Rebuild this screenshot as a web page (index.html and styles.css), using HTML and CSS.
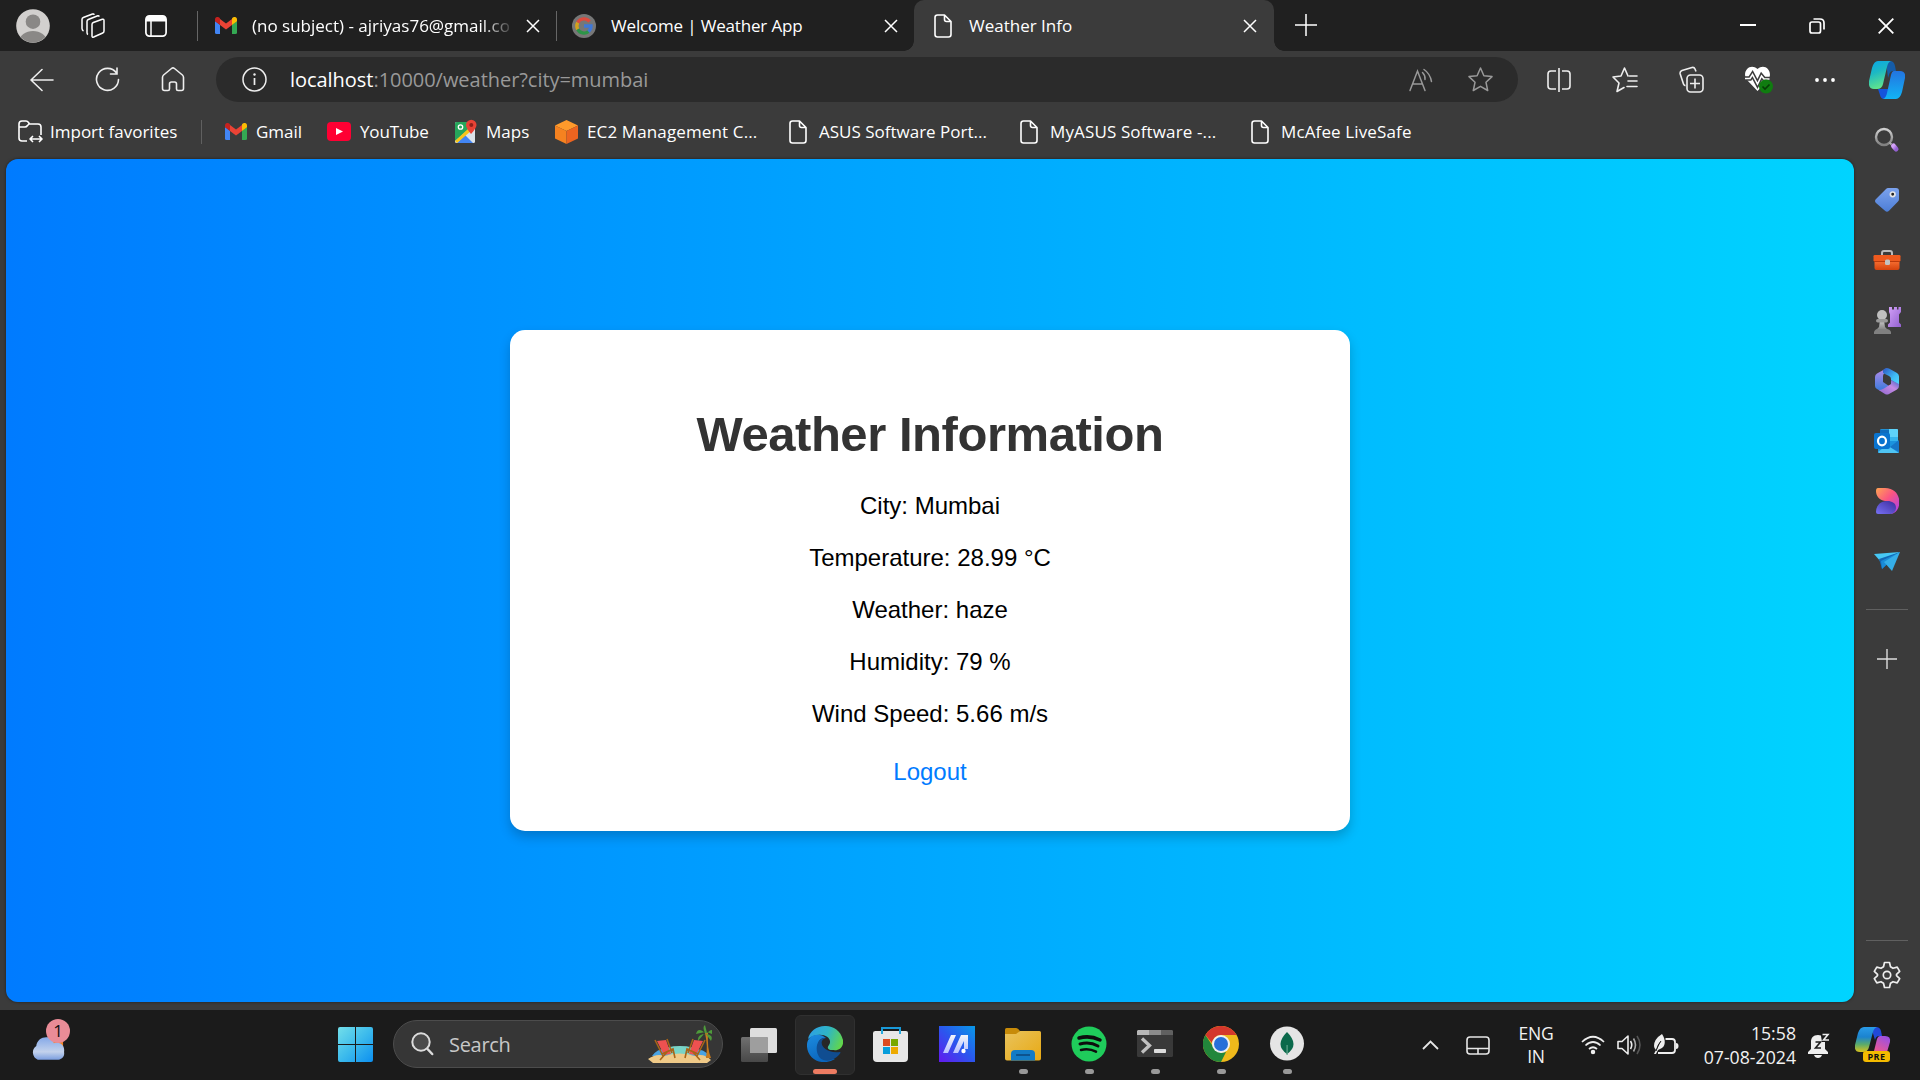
FILE: index.html
```html
<!DOCTYPE html>
<html lang="en">
<head>
<meta charset="utf-8">
<title>Weather Info</title>
<link rel="stylesheet" href="styles.css">
</head>
<body>
<svg class="defs" aria-hidden="true">
  <defs>
    <linearGradient id="gBlueGreen" x1="0" y1="0" x2="0.3" y2="1"><stop offset="0" stop-color="#0aa5e8"/><stop offset=".45" stop-color="#1cb8c4"/><stop offset="1" stop-color="#5fe38d"/></linearGradient>
    <linearGradient id="gBlue" x1="0" y1="0" x2="0" y2="1"><stop offset="0" stop-color="#2374e0"/><stop offset="1" stop-color="#12b4f5"/></linearGradient>
    <linearGradient id="gCopL" x1="0" y1="0" x2="0" y2="1"><stop offset="0" stop-color="#2a9be8"/><stop offset=".4" stop-color="#1b83cf"/><stop offset=".7" stop-color="#5cab6a"/><stop offset="1" stop-color="#d9c31c"/></linearGradient>
    <linearGradient id="gCopR" x1=".7" y1="0" x2=".2" y2="1"><stop offset="0" stop-color="#9d50e0"/><stop offset=".6" stop-color="#e0579c"/><stop offset="1" stop-color="#f47a62"/></linearGradient>
    <linearGradient id="gPurple" x1="0" y1="0" x2="1" y2="1"><stop offset="0" stop-color="#d3a2f8"/><stop offset="1" stop-color="#9360d0"/></linearGradient>
    <linearGradient id="gGrey" x1="0" y1="0" x2="0" y2="1"><stop offset="0" stop-color="#d0d0d0"/><stop offset="1" stop-color="#808080"/></linearGradient>
    <linearGradient id="gTag" x1="0" y1="0" x2="0" y2="1"><stop offset="0" stop-color="#7ba2ee"/><stop offset="1" stop-color="#4d7ed5"/></linearGradient>
    <linearGradient id="gBox" x1="0" y1="0" x2="0" y2="1"><stop offset="0" stop-color="#fb7436"/><stop offset="1" stop-color="#d4420d"/></linearGradient>
    <linearGradient id="gM1" x1="0" y1="0" x2="0" y2="1"><stop offset="0" stop-color="#b98bea"/><stop offset="1" stop-color="#3a7bdc"/></linearGradient>
    <linearGradient id="gM2" x1="0" y1="0" x2="1" y2="1"><stop offset="0" stop-color="#2d55c4"/><stop offset=".6" stop-color="#3fbdf5"/><stop offset="1" stop-color="#55d8fb"/></linearGradient>
    <linearGradient id="gM3" x1="0" y1="1" x2="1" y2="0"><stop offset="0" stop-color="#8a63cf"/><stop offset=".6" stop-color="#c58be2"/><stop offset="1" stop-color="#3c62c9"/></linearGradient>
    <linearGradient id="gDes" x1="0" y1="0" x2="1" y2="1"><stop offset="0" stop-color="#ffa552"/><stop offset=".45" stop-color="#fb5581"/><stop offset="1" stop-color="#a63df5"/></linearGradient>
    <linearGradient id="gDes2" x1="0" y1="1" x2="1" y2="0"><stop offset="0" stop-color="#7771f5"/><stop offset="1" stop-color="#3c2b9b"/></linearGradient>
    <linearGradient id="gWin" x1="0" y1="0" x2="1" y2="1"><stop offset="0" stop-color="#73dfea"/><stop offset=".5" stop-color="#3dbbec"/><stop offset="1" stop-color="#0c8ff0"/></linearGradient>
    <linearGradient id="gCloud" x1="0" y1="0" x2="0" y2="1"><stop offset="0" stop-color="#84a8e8"/><stop offset=".65" stop-color="#c3d2ec"/><stop offset="1" stop-color="#7b9ee0"/></linearGradient>
    <linearGradient id="gEdge1" x1="0" y1=".3" x2="1" y2=".6"><stop offset="0" stop-color="#2d9fe4"/><stop offset=".5" stop-color="#2fb5c5"/><stop offset="1" stop-color="#62d64b"/></linearGradient>
    <linearGradient id="gEdge2" x1="0" y1="0" x2=".4" y2="1"><stop offset="0" stop-color="#1c8ce0"/><stop offset="1" stop-color="#0b66bd"/></linearGradient>
    <linearGradient id="gAsus" x1="1" y1="0" x2="0" y2="1"><stop offset="0" stop-color="#0899e8"/><stop offset=".5" stop-color="#2b56ee"/><stop offset="1" stop-color="#6419ee"/></linearGradient>
    <linearGradient id="gFolder" x1="0" y1="0" x2="1" y2="1"><stop offset="0" stop-color="#e9c35d"/><stop offset="1" stop-color="#e8a913"/></linearGradient>
    <linearGradient id="gStroke" x1="0" y1="0" x2="0" y2="1"><stop offset="0" stop-color="#f2f5fb"/><stop offset="1" stop-color="#b7bfff"/></linearGradient>
    <linearGradient id="gBack" x1="0" y1="0" x2="0" y2="1"><stop offset="0" stop-color="#707070"/><stop offset="1" stop-color="#484848"/></linearGradient>
    <symbol id="gmail" viewBox="0 0 22 17">
      <path fill="#4285f4" d="M0 4v11.5Q0 17 1.5 17H5V7.700z"/><path fill="#34a853" d="M22 4v11.500q0 1.500-1.500 1.500H17V7.700z"/>
      <path fill="#ea4335" d="M5 2l6 4.500L17 2v6l-6 4.500L5 8z"/><path fill="#c5221f" d="M0 2.500C0 0 2.700-.8 4.500.8L5 1.500V8L0 4.300z"/><path fill="#fbbc04" d="M22 2.500C22 0 19.300-.8 17.500.8l-.5.700V8l5-3.700z"/>
    </symbol>
    <symbol id="file" viewBox="0 0 18 24"><path fill="none" stroke="#fff" stroke-width="1.600" stroke-linejoin="round" d="M3.500 1h7L17 7.500v13q0 2.500-2.500 2.500h-11Q1 23 1 20.500v-17Q1 1 3.500 1zM10.500 1v4.500q0 2 2 2H17"/></symbol>
    <symbol id="close" viewBox="0 0 14 14"><path fill="none" stroke="#fff" stroke-width="1.500" d="M1 1l12 12M13 1L1 13"/></symbol>
  </defs>
</svg>

<header class="tabstrip">
  <div class="strip-actions">
    <svg width="34" height="34" viewBox="0 0 34 34"><clipPath id="av"><circle cx="17" cy="17" r="16.500"/></clipPath><circle cx="17" cy="17" r="16.800" fill="#d2d0ce"/><g fill="#8a8886" clip-path="url(#av)"><circle cx="17" cy="12.700" r="7.300"/><path d="M2.500 34c1-16 28-16 29 0z"/></g></svg>
    <svg width="26" height="26" viewBox="0 0 26 26" fill="none" stroke="#fff" stroke-width="1.500" stroke-linejoin="round"><path d="M12 11.500q0-1.500 1.300-2l9-3.200q1.700-.5 1.700 1.200V18q0 1.500-1.300 2l-9 4q-1.700.6-1.700-1zM8 21.500q-1-.4-1-2V8.500q0-1.400 1.300-2l9.500-3.700q1-.3 1.500.8M3.500 18q-1.500-.8-1.500-2.500V6.500Q2 5 3.300 4.500L12.500 1q1.300-.4 1.700.9"/></svg>
    <svg width="22" height="22" viewBox="0 0 22 22"><rect x=".9" y=".9" width="20.200" height="20.200" rx="3.500" fill="none" stroke="#fff" stroke-width="1.700"/><path fill="#fff" d="M1 6.500V4q0-3 3-3h14q3 0 3 3v2.500z"/><path stroke="#fff" stroke-width="1.500" d="M6 6v15"/></svg>
  </div>
  <div class="tab tab-divided"><svg width="22" height="17"><use href="#gmail"/></svg><span class="tab-title faded">(no subject) - ajriyas76@gmail.co</span><svg class="tab-close" width="14" height="14"><use href="#close"/></svg></div>
  <div class="tab tab-divided tab-second">
    <svg width="24" height="24" viewBox="0 0 24 24"><circle cx="12" cy="12" r="12" fill="#777"/><g fill="none" stroke-width="3.300"><path stroke="#dd4b3e" d="M17.500 7.500A7.200 7.200 0 0 0 5.700 8.600"/><path stroke="#d3a21d" d="M5.700 8.600a7.200 7.200 0 0 0 0 6.800"/><path stroke="#2d9448" d="M5.700 15.400a7.200 7.200 0 0 0 10.800 2.100"/><path stroke="#3f78d8" d="M16.500 17.500A7.200 7.200 0 0 0 19 12h-7"/></g></svg>
    <span class="tab-title tight">Welcome | Weather App</span><svg class="tab-close" width="14" height="14"><use href="#close"/></svg></div>
  <div class="tab tab-active"><svg width="18" height="24"><use href="#file"/></svg><span class="tab-title">Weather Info</span><svg class="tab-close" width="14" height="14"><use href="#close"/></svg></div>
  <svg class="new-tab" width="22" height="22" viewBox="0 0 22 22"><path stroke="#fff" stroke-width="1.500" d="M11 0v22M0 11h22"/></svg>
  <div class="window-controls">
    <svg width="16" height="16" viewBox="0 0 16 16"><path stroke="#fff" stroke-width="2" d="M0 7h16"/></svg>
    <svg width="16" height="16" viewBox="0 0 16 16" fill="none" stroke="#fff" stroke-width="1.700"><rect x="1" y="4" width="10.500" height="11" rx="2"/><path d="M4.500 1H11q4 0 4 4v6.500"/></svg>
    <svg width="16" height="16" viewBox="0 0 16 16"><path stroke="#fff" stroke-width="1.800" d="M.7.7l14.600 14.600M15.300.7L.7 15.300"/></svg>
  </div>
</header>

<nav class="toolbar">
  <div class="nav-buttons">
    <svg width="24" height="24" viewBox="0 0 24 24" fill="none" stroke="#eee" stroke-width="1.600" stroke-linecap="round" stroke-linejoin="round"><path d="M23 12H1M12 1.500L1 12l11 10.500"/></svg>
    <svg width="25" height="25" viewBox="0 0 25 25" fill="none" stroke="#eee" stroke-width="1.600" stroke-linecap="round"><path d="M23.500 12.500A11 11 0 1 1 21.500 6M22 1v6h-6.500"/></svg>
    <svg width="24" height="25" viewBox="0 0 24 25" fill="none" stroke="#eee" stroke-width="1.600" stroke-linejoin="round"><path d="M1.500 10.500Q1.500 9 2.600 8L10.500 1.500q1.500-1.200 3 0L21.400 8q1.100 1 1.100 2.500v11q0 2-2 2H17q-1.500 0-1.500-1.500v-5q0-2-2-2h-3q-2 0-2 2v5q0 1.500-1.500 1.500H3.500q-2 0-2-2z"/></svg>
  </div>
  <div class="address">
    <svg width="25" height="25" viewBox="0 0 25 25"><circle cx="12.500" cy="12.500" r="11.500" fill="none" stroke="#eee" stroke-width="1.500"/><path stroke="#eee" stroke-width="1.700" d="M12.500 11v7"/><circle cx="12.500" cy="7.500" r="1.200" fill="#eee"/></svg>
    <span class="url"><b>localhost</b>:10000/weather?city=mumbai</span>
    <svg class="read-aloud" width="24" height="24" viewBox="0 0 24 24" fill="none" stroke="#999" stroke-width="1.500" stroke-linecap="round"><path d="M1 22.500L8.500 3 16 22.500M4 16h9.500M13.500 4.500q3 3 2.500 7M15 1.500q6 4 7.500 12"/></svg>
    <svg width="25" height="25" viewBox="0 0 25 25" fill="none" stroke="#999" stroke-width="1.500" stroke-linejoin="round"><path d="M12.500 1l3.400 7.700 8.100.9-6 5.700 1.700 8.200-7.200-4.200-7.200 4.200L7 15.300 1 9.600l8.100-.9z"/></svg>
  </div>
  <div class="tool-icons">
    <svg width="24" height="26" viewBox="0 0 24 26" fill="none" stroke="#eee" stroke-width="1.600"><path d="M9 4H4Q1 4 1 7v12q0 3 3 3h5M15 4h5q3 0 3 3v12q0 3-3 3h-5M12 1v24"/></svg>
    <svg width="26" height="26" viewBox="0 0 26 26" fill="none" stroke="#eee" stroke-width="1.600" stroke-linejoin="round" stroke-linecap="round"><path d="M16 9L12.500 1 9 9 1 10l6 6-2 8.500 7-4M17.500 9H25M16 14h9M15 19.500h10"/></svg>
    <svg width="25" height="27" viewBox="0 0 25 27" fill="none" stroke="#eee" stroke-width="1.600"><rect x="8" y="9" width="16" height="17" rx="3.500"/><path d="M16 12.500v10M11 17.500h10M17 5.500L16 3q-.8-2-3-1.500L3 4.500Q.6 5.500 1.200 8L4.500 18q.5 1.500 2 1.600"/></svg>
    <svg width="28" height="29" viewBox="0 0 28 29"><path fill="#fff" d="M12.500 26L2 15C-4 7 5-3 12.500 4 20-3 29 7 23 15z"/><path fill="none" stroke="#3b3b3b" stroke-width="4.600" d="M-1 13.500h6l2.500-4 5 9.500 4-8 2.500 3h8"/><path fill="none" stroke="#fff" stroke-width="1.600" d="M0 13.500h5l2.500-4 5 9.500 4-8 2.500 3h5.500"/><circle cx="21" cy="21.500" r="7" fill="#107c10"/><path fill="none" stroke="#063d06" stroke-width="1.600" d="M17.500 21.500l2.500 2.500 4.500-4.500"/></svg>
    <svg width="22" height="6" viewBox="0 0 22 6" fill="#fff"><circle cx="3" cy="3" r="1.900"/><circle cx="11" cy="3" r="1.900"/><circle cx="19" cy="3" r="1.900"/></svg>
  </div>
  <svg class="copilot" width="36" height="38" viewBox="0 0 36 38" preserveAspectRatio="none"><path fill="#1554dc" d="M9 28h12l-3 7q-1 3-3 3-3 0-4-4z"/><path fill="#155ca8" d="M17 0h4q4 0 5 5l1 5h-3q-3 0-4 4l-1 3z"/><path fill="url(#gBlueGreen)" d="M9 0h13q-3 1-4 6l-4 17q-1 5-6 5H5q-6 0-5-8L3 7Q5 0 9 0z"/><path fill="url(#gBlue)" d="M25 10h6q6 0 5 7l-3 14q-2 7-6 7H14q3-1 4-6l4-18q1-4 3-4z"/></svg>
</nav>

<nav class="favorites">
  <div class="fav fav-import"><svg width="25" height="24" viewBox="0 0 25 24" fill="none" stroke="#fff" stroke-width="1.600" stroke-linejoin="round"><path d="M9 21H4q-3 0-3-3V4q0-3 3-3h4q1.500 0 2.500 1.500L11.500 4H20q3 0 3 3v8M1 7h6q1.500 0 2.500-1.500L11 4M12.500 19h11M15 16l-3 3 3 3M21 16l3 3-3 3"/></svg><span>Import favorites</span></div>
  <div class="fav fav-divided"><svg width="22" height="17"><use href="#gmail"/></svg><span>Gmail</span></div>
  <div class="fav"><svg width="24" height="19" viewBox="0 0 24 19"><rect width="24" height="19" rx="4" fill="#ff0033"/><path fill="#fff" d="M9 6l7 3.500L9 13z"/></svg><span class="tight">YouTube</span></div>
  <div class="fav"><svg width="22" height="25" viewBox="0 0 22 25"><rect y="3" width="20" height="21" rx="1.500" fill="#dbe2e8"/><path fill="#26a65b" d="M0 4.500Q0 3 1.500 3H13L14 10 0 22z"/><path fill="#4285f4" d="M2 24l8-8 8 8z"/><path fill="#f8c51b" d="M0 22L14 9l2 3L2 24z"/><circle cx="5.500" cy="8" r="2.200" fill="none" stroke="#fff" stroke-width="1.300"/><path fill="#e94235" d="M16 15q-5-6-5-9a5 5 0 0 1 10.500 0c0 3-5.500 9-5.500 9z"/><circle cx="16.300" cy="6" r="2" fill="#8f211b"/></svg><span>Maps</span></div>
  <div class="fav"><svg width="23" height="24" viewBox="0 0 23 24"><path fill="#ff9a2b" d="M11.500 0L23 5.500 11.500 11 0 5.500z"/><path fill="#f58220" d="M0 5.500L11.500 11v13L0 18.500z"/><path fill="#ec6420" d="M23 5.500L11.500 11v13L23 18.500z"/></svg><span class="loose">EC2 Management C...</span></div>
  <div class="fav fav-file"><svg width="18" height="24"><use href="#file"/></svg><span>ASUS Software Port...</span></div>
  <div class="fav fav-file"><svg width="18" height="24"><use href="#file"/></svg><span class="loose">MyASUS Software -...</span></div>
  <div class="fav fav-file"><svg width="18" height="24"><use href="#file"/></svg><span class="loose">McAfee LiveSafe</span></div>
</nav>

<div class="browser-body">
  <main class="viewport">
    <section class="card">
      <h1>Weather Information</h1>
      <p>City: Mumbai</p>
      <p>Temperature: 28.99 °C</p>
      <p>Weather: haze</p>
      <p>Humidity: 79 %</p>
      <p>Wind Speed: 5.66 m/s</p>
      <a class="logout">Logout</a>
    </section>
  </main>
  <aside class="sidebar">
    <div class="tools">
      <svg width="26" height="26" viewBox="0 0 26 26"><path stroke="url(#gPurple)" stroke-width="5" stroke-linecap="round" d="M19.500 19l2.500 3"/><circle cx="10" cy="10" r="8" fill="none" stroke="url(#gGrey)" stroke-width="2.400"/><path stroke="#aaa" stroke-width="2" d="M15.500 15.500l2 2"/></svg>
      <svg width="26" height="26" viewBox="0 0 26 26"><path fill="url(#gTag)" d="M14 1h8q3 0 3 3v8q0 1.500-1 2.500l-9 9.300q-2 1.800-4 0L2 16q-2-2 0-4L12 2q1-1 2-1z"/><circle cx="18.700" cy="7.300" r="2.300" fill="#222" stroke="#e5e5e5" stroke-width="1.700"/></svg>
      <svg width="28" height="22" viewBox="0 0 28 22"><path fill="none" stroke="#bbb" stroke-width="2" d="M9 7V4q0-2 2-2h6q2 0 2 2v3"/><path fill="url(#gBox)" d="M1.500 11h25v8q0 2-2 2h-21q-2 0-2-2z"/><rect x=".5" y="6" width="27" height="6.500" rx="1.300" fill="#ef5a1e"/><path stroke="#b93a0c" d="M1 12.500h26"/><rect x="12" y="10.500" width="5" height="5.500" rx="1.500" fill="#c2c2c2"/></svg>
      <svg width="28" height="28" viewBox="0 0 28 28"><path fill="url(#gPurple)" d="M16 0h3v2.500h2V0h3v2.500h1.500V0H28v5l-2 2.500v8l2 2V20H15v-2.500l2-2v-8L16 5z"/><path fill="url(#gGrey)" d="M7 13h4l1 7 3 3H3l3-3z"/><circle cx="9" cy="8" r="5" fill="#bfbfbf"/><rect x="3" y="12" width="12" height="3.500" rx="1.700" fill="#999"/><path fill="#808080" d="M1 27v-2q1-3 4-3h8q4 0 5 3v2z"/></svg>
      <svg width="26" height="28" viewBox="0 0 26 28"><path fill="url(#gM1)" d="M13 1L3 6.500Q1 7.700 1 10v9q0 2 2 3l3 1.500Q8 24 11 22l4-3-6-4V9q0-2 2-3.500z"/><path fill="url(#gM2)" d="M11 1.500q2-1 4 0l8 4.500q2 1.200 2 3.500V18l-8-5v-1q0-2-2-3L9 6V3z"/><path fill="url(#gM3)" d="M3 22q3 2 7-.5L17 17v-4l8 4v2q0 2.300-2 3.500L15 27q-2 1-4 0z"/></svg>
      <svg width="26" height="26" viewBox="0 0 26 26"><rect x="6" y="1" width="18" height="15" rx="1.500" fill="#35b5ee"/><path fill="#0f6cbd" d="M6 1.500h9V9H6z"/><path fill="#5ed3fa" d="M15 1h8q1 0 1 1v7h-9z"/><path fill="#1b93de" d="M4 13h21v11q0 1-1 1H5q-1 0-1-1z"/><path fill="#4fc4f3" d="M4 24l9-7 12 8H5z"/><path fill="#1676c7" d="M25 12v12l-9-5z"/><rect y="5" width="16" height="16" rx="2" fill="#0a74cf"/><ellipse cx="8" cy="13" rx="4" ry="4.300" fill="none" stroke="#fff" stroke-width="2.200"/></svg>
      <svg width="24" height="28" viewBox="0 0 24 28"><path fill="url(#gDes)" d="M3 1h7c18 0 18 24 6 26l3-7c0-4-4-6-9-6C4 13 1 9 1 4Q1 1 3 1z"/><path fill="url(#gDes2)" d="M3 27h12c3 0 6-3 6-6 0-5-4-7-9-7C5 14 1 19 1 25q0 2 2 2z"/></svg>
      <svg width="26" height="20" viewBox="0 0 26 20"><path fill="#46c8f5" d="M0 3L26 1 7 11z"/><path fill="#1167b5" d="M5 8l21-7L8 18z"/><path fill="#1a8bd6" d="M7 10L26 1 8 18z"/><path fill="#35aee8" d="M10 11L26 1l-8 19z"/></svg>
    </div>
    <hr>
    <svg class="add" width="20" height="20" viewBox="0 0 20 20"><path stroke="#ddd" stroke-width="1.400" d="M10 0v20M0 10h20"/></svg>
    <hr class="lower">
    <svg class="settings" width="28" height="28" viewBox="0 0 28 28" fill="none" stroke="#eee" stroke-width="1.700" stroke-linejoin="round"><path d="M11.500 1.500h5l1 4.300 2.500 1.500 4.200-1.200 2.500 4.300-3.200 3v1.200l3.200 3-2.500 4.300-4.200-1.200-2.500 1.500-1 4.300h-5l-1-4.300L8 20.700l-4.200 1.200-2.500-4.300 3.200-3v-1.200l-3.200-3L3.800 6.100 8 7.300l2.500-1.500z"/><circle cx="14" cy="14" r="3.700"/></svg>
  </aside>
</div>

<footer class="taskbar">
  <div class="widget"><svg width="37" height="25" viewBox="0 0 38 25"><path fill="#f08322" d="M19 1h16v10H19z"/><path fill="url(#gCloud)" d="M9 24a8 8 0 0 1-1.500-14C8 0 23-3 25.500 7 33 5 37 10 36 16c1 5-3 8-7 8z"/></svg><span class="badge">1</span></div>
  <svg class="start" width="36" height="36" viewBox="0 0 36 36"><path fill="url(#gWin)" d="M2 0h15v17H0V2Q0 0 2 0zM18 0h15q2 0 2 2v15H18zM0 18h17v17H2q-2 0-2-2zM18 18h17v15q0 2-2 2H18z"/></svg>
  <div class="search">
    <svg width="23" height="24" viewBox="0 0 23 24" fill="none" stroke="#dcdcdc" stroke-width="2"><circle cx="10" cy="10" r="8.700" fill="#4a4a4a"/><path stroke-width="2.500" stroke-linecap="round" d="M16.500 17l4.700 5"/></svg>
    <span>Search</span>
    <svg class="beach" width="64" height="38" viewBox="0 0 64 38"><path fill="#4aa3e3" d="M4 31Q10 22 22 24h24q11 0 15 7z"/><ellipse cx="32" cy="26" rx="17" ry="5" fill="#79d4c7"/><path fill="#f0ca88" d="M0 34q9-6 16-3 16-5 31 0 9-3 16 4l-4 3H5z"/><path fill="#c87a1c" d="M57 8h3q-1 15 3 25h-5q2-12-1-25z"/><g fill="#4e9b3b"><path d="M58 9Q50 1 48 9l9-2zM58 9q8-8 6 0l-5-2zM58 9q-9 0-8 7l6-7zM58 9q8 1 5 7zM57 8q-3-6 0-8l2 8z"/></g><path fill="#ee5150" d="M9 16l9-1 5 14-7 1zM46 15l9 1-7 14-7-1z"/><g fill="none" stroke="#a86518" stroke-width="1.600"><path d="M7 15l8 16M19 14l5 14M12 35l7-8M14 29l11-5 2 9M57 15l-8 16M45 14l-5 14M52 35l-7-8M50 29l-11-5-2 9"/></g></svg>
  </div>
  <svg class="task-view" width="36" height="36" viewBox="0 0 36 36"><rect x="9" y="1" width="27" height="25" rx="1.500" fill="#dedede"/><rect y="10" width="27" height="25" rx="1.500" fill="url(#gBack)"/><path fill="#9e9e9e" d="M9 10h16.500q1.500 0 1.500 1.500V26H9z"/></svg>
  <div class="apps">
    <div class="app current"><svg width="36" height="36" viewBox="0 0 36 36"><path fill="url(#gEdge1)" d="M1 13C4-3 31-6 36 14c1 7-4 11-10 10-6 0-6-3-4-5 5-8-9-15-21-6z"/><path fill="url(#gEdge2)" d="M0 18C1 8 13 6 19 12c-6-1-9 5-8 10 2 8 11 11 17 11C15 41-1 33 0 18z"/><path fill="#104d91" d="M19 12c-9 2-4 16 14 14q1 0 0 1.500C29 33 20 38 13 32 6 24 11 10 19 12z"/></svg></div>
    <div class="app"><svg width="36" height="36" viewBox="0 0 36 36"><path fill="none" stroke="#1999d8" stroke-width="2" d="M9 8V2h18v6"/><path fill="#e7e7e7" d="M2.500 5H33q2 0 2 2v25q0 4-4 4H4q-4 0-4-4V7q0-2 2.500-2z"/><path stroke="#27aadf" stroke-width="2" d="M9 4v4M27 4v4"/><path fill="#dc4a20" d="M10 13h7v7h-7z"/><path fill="#78a800" d="M18 13h7v7h-7z"/><path fill="#079ddb" d="M10 21h7v7h-7z"/><path fill="#edaa00" d="M18 21h7v7h-7z"/></svg></div>
    <div class="app"><svg width="36" height="36" viewBox="0 0 36 36"><path fill="url(#gAsus)" d="M0 0h36v36H0z"/><path fill="url(#gStroke)" d="M12 9h5L9 27H4zM22 9h7v14h-4v-8l-6 12h-5z"/><circle cx="24.500" cy="25" r="2.200" fill="#fff"/></svg></div>
    <div class="app running"><svg width="36" height="36" viewBox="0 0 36 36"><path fill="#c78b09" d="M0 9V3.500Q0 2 1.500 2H11q2 0 4 3l-3 4z"/><path fill="url(#gFolder)" d="M0 8h11l4-3h19.500Q36 5 36 6.500v26q0 2-2 2H2q-2 0-2-2z"/><path fill="#127bc5" d="M6 34.500V28q0-4 4-4h16q4 0 4 4v6.500z"/><path stroke="#0d4a80" stroke-width="1.600" d="M11 29h14"/></svg></div>
    <div class="app running"><svg width="36" height="36" viewBox="0 0 36 36"><circle cx="18" cy="18" r="17.500" fill="#1fcc5b"/><g fill="none" stroke="#0d0d0d" stroke-linecap="round"><path stroke-width="3.500" d="M8 12q11-3 21 2"/><path stroke-width="3" d="M9 18q10-2.500 18 2"/><path stroke-width="2.500" d="M10 24q8-2 15 1.700"/></g></svg></div>
    <div class="app running"><svg width="36" height="36" viewBox="0 0 36 36"><rect y="4" width="36" height="27" rx="1.500" fill="#393939"/><path fill="#b7b7b7" d="M1 4h11v5H0V5z"/><path fill="#8c8c8c" d="M12 4h12v5H12z"/><path fill="#606060" d="M24 4h11l1 1v4H24z"/><path fill="none" stroke="#c0c0c0" stroke-width="3.300" d="M5 12.500l7.500 7L5 26.500"/><rect x="17" y="23" width="12" height="4" rx=".8" fill="#dcdcdc"/></svg></div>
    <div class="app running"><svg width="36" height="36" viewBox="0 0 36 36"><circle cx="18" cy="18" r="18" fill="#efb91b"/><path fill="#22873b" d="M18 36A18 18 0 0 1 2.400 9L11 22l7 5 5-1z"/><path fill="#d4372c" d="M2.400 9a18 18 0 0 1 31.200 0H18q-7 0-9 8z"/><circle cx="18" cy="18" r="9" fill="#f0f0f0"/><circle cx="18" cy="18" r="7" fill="#276fd9"/></svg></div>
    <div class="app running"><svg width="36" height="36" viewBox="0 0 36 36"><circle cx="18" cy="17.500" r="17" fill="#e5e5e5"/><path fill="#0b694b" d="M18 6q13 13 0 22Q5 19 18 6z"/><path fill="#62a58d" d="M17.500 19h1.200v10h-1.200z"/></svg></div>
  </div>
  <div class="tray">
    <svg width="17" height="10" viewBox="0 0 17 10" fill="none" stroke="#e6e6e6" stroke-width="1.800"><path d="M1 9l7.500-7.500L16 9"/></svg>
    <svg width="24" height="19" viewBox="0 0 24 19" fill="none" stroke="#e6e6e6" stroke-width="1.600"><rect x="1" y="1" width="22" height="17" rx="3"/><path d="M1 12.500h22M12 12.500V18"/></svg>
    <div class="lang">ENG<br>IN</div>
    <svg width="24" height="20" viewBox="0 0 24 20" fill="none" stroke="#eee" stroke-width="1.700"><path d="M1 7q11-10.500 22 0M4.500 10.500q7.500-7 15 0M8 14q4-3.500 8 0"/><circle cx="12" cy="17" r="1.400" fill="#eee"/></svg>
    <svg width="25" height="22" viewBox="0 0 25 22" fill="none" stroke="#eee" stroke-width="1.600" stroke-linejoin="round"><path d="M1 7.500h4l6-5.500v18l-6-5.500H1zM13.500 7q2.500 4 0 8"/><path stroke="#aaa" d="M16.500 4.500q4 6.500 0 13"/><path stroke="#555" d="M20 2q6 9 0 18"/></svg>
    <svg width="25" height="22" viewBox="0 0 25 22"><path fill="none" stroke="#eee" stroke-width="1.800" d="M11.500 5H18q3 0 3 3v8q0 3-3 3H4"/><path fill="#eee" d="M22 9q2.500 0 2.500 3T22 15zM0 12Q0 5 8 0c4 6 4 13-2 15l-2 1-2 4H0l2-4q-2-2-2-4z"/><path stroke="#1b1b1b" d="M7 7q-3 3-5 10"/></svg>
    <div class="clock">15:58<br>07-08-2024</div>
    <svg width="22" height="25" viewBox="0 0 22 25"><path fill="#eee" d="M10 2C5 2 3 5 3 9v7l-3 3v2h20v-2l-3-3V9q0-7-7-7zM6 22h8q-1 3-4 3t-4-3z"/><path fill="#1b1b1b" d="M12.500 0H22v9h-8z"/><g fill="none" stroke-width="1.600"><path stroke="#eee" d="M14.500 1.500H20L15.500 7H21"/><path stroke="#1b1b1b" d="M7.500 9h5l-5 6h5.500"/></g></svg>
    <div class="preview"><svg width="36" height="31" viewBox="0 0 36 31"><path fill="#2149d8" d="M16 0h5q4 0 5 4l1 5h-3q-3 0-4 4z"/><path fill="url(#gCopL)" d="M9 0h13q-3 1-4 5l-4 15q-1 5-6 5H5q-6 0-5-7L3 6Q5 0 9 0z"/><path fill="url(#gCopR)" d="M25 9h5q6 0 5 6l-3 10q-2 6-6 6H14l4-3 4-16q1-3 3-3z"/></svg><span class="pre">PRE</span></div>
  </div>
</footer>
</body>
</html>
```
FILE: styles.css
```css
* { box-sizing: border-box; }
body {
  margin: 0;
  width: 1920px;
  height: 1080px;
  overflow: hidden;
  display: flex;
  flex-direction: column;
  background: #3b3b3b;
  color: #fff;
  font: 17px/24px "Open Sans", "Noto Sans", sans-serif;
}
svg { display: block; flex: none; }
span { white-space: nowrap; }
.defs { position: absolute; width: 0; height: 0; }
.tight { letter-spacing: -.17px; }
.loose { letter-spacing: .13px; }

/* tab strip */
.tabstrip { display: flex; align-items: center; height: 51px; background: #202020; flex: none; }
.strip-actions { display: flex; align-items: center; width: 197px; padding-left: 16px; gap: 30px; }
.strip-actions svg:last-child { margin-left: 9px; }
.tab { display: flex; align-items: center; width: 359px; height: 51px; padding-left: 18px; padding-right: 16px; position: relative; }
.tab-divided::before { content: ""; width: 1px; height: 30px; background: #666; margin-left: -18px; margin-right: 17px; }
.tab-second { width: 358px; padding-left: 16px; }
.tab-second::before { margin-left: -16px; margin-right: 15px; }
.tab-title { margin-left: 15px; }
.faded { -webkit-mask-image: linear-gradient(90deg, #000 89%, transparent 102%); mask-image: linear-gradient(90deg, #000 89%, transparent 102%); }
.tab-close { margin-left: auto; }
.tab-active { width: 360px; background: #3b3b3b; border-radius: 10px 10px 0 0; padding-left: 20px; padding-right: 17px; }
.tab-active .tab-title { margin-left: 17px; }
.tab-active::before, .tab-active::after { content: ""; position: absolute; bottom: 0; width: 10px; height: 10px; }
.tab-active::before { left: -10px; background: radial-gradient(circle at 0 0, transparent 9.5px, #3b3b3b 10px); }
.tab-active::after { right: -10px; background: radial-gradient(circle at 100% 0, transparent 9.5px, #3b3b3b 10px); }
.new-tab { margin-left: 21px; margin-bottom: 2px; }
.window-controls { display: flex; gap: 53px; margin-left: auto; padding-right: 26px; }

/* toolbar */
.toolbar { display: flex; align-items: center; height: 57px; flex: none; }
.nav-buttons { display: flex; align-items: center; gap: 41px; width: 216px; padding-left: 30px; }
.address { display: flex; align-items: center; width: 1302px; height: 45px; padding: 0 25px 0 26px; border-radius: 23px; background: #2b2b2b; }
.url { margin-left: 23px; font-size: 20px; letter-spacing: -.04px; color: #999; }
.url b { font-weight: 400; color: #fff; }
.read-aloud { margin-left: auto; margin-right: 35px; }
.tool-icons { display: flex; align-items: center; gap: 41px; margin-left: 29px; }
.copilot { margin-left: auto; margin-right: 15px; }

/* favorites bar */
.favorites {
  display: grid;
  grid-template-columns: 184px 125px 128px 100px 234px 231px 231px 300px;
  padding-left: 18px;
  padding-bottom: 4px;
  height: 51px;
  align-items: center;
  flex: none;
}
.fav { display: flex; align-items: center; gap: 9px; height: 47px; }
.fav-import { gap: 7px; }
.fav-divided::before { content: ""; width: 1px; height: 24px; background: #606060; margin: 0 14px 0 -1px; }
.fav-file { gap: 12px; }

/* page and sidebar */
.browser-body { display: flex; height: 851px; padding-left: 6px; flex: none; }
.viewport {
  display: flex;
  align-items: center;
  justify-content: center;
  width: 1848px;
  height: 843px;
  border-radius: 12px;
  background: linear-gradient(to right, #007bff, #00d4ff);
  box-shadow: 0 0 3px rgba(0, 0, 0, .5);
}
.card {
  width: 840px;
  height: 501px;
  padding: 76px 60px 60px;
  border-radius: 15px;
  background: #fff;
  box-shadow: 0 6px 12px rgba(0, 0, 0, .2);
  color: #000;
  text-align: center;
  font: 24px/28px "Liberation Sans", Arial, sans-serif;
}
.card h1 { margin: 0 0 30px; font-size: 49px; letter-spacing: -.45px; line-height: 56px; color: #333; }
.card p { margin: 0 0 24px; }
.logout { display: block; margin-top: 30px; color: #007bff; }
.sidebar { display: flex; flex-direction: column; align-items: center; width: 66px; margin-top: -49px; height: 900px; }
.tools { display: grid; grid-auto-rows: 60.2px; place-items: center; flex: none; }
.sidebar hr { width: 42px; height: 1px; border: 0; margin: 17px 0 39px; background: #606060; }
.sidebar .lower { margin-top: auto; margin-bottom: 20px; }
.settings { margin-bottom: 21px; }

/* taskbar */
.taskbar { display: flex; align-items: center; height: 70px; background: #1b1b1b; flex: none; color: #f2f2f2; }
.widget { position: relative; width: 338px; padding: 7px 0 0 29px; }
.badge { position: absolute; left: 46px; top: -10px; width: 24px; height: 24px; border-radius: 50%; background: #e98c97; color: #111; text-align: center; font-size: 17px; line-height: 24px; }
.search { display: flex; align-items: center; width: 330px; height: 48px; margin-left: 19px; margin-top: -2px; padding: 0 9px 0 17px; border: 1px solid #4c4c4c; border-radius: 24px; background: #363636; color: #c8c8c8; font-size: 20px; }
.search span { margin-left: 15px; letter-spacing: -.3px; padding-top: 2px; }
.beach { margin-left: auto; margin-right: 1px; }
.task-view { margin-left: 18px; }
.apps { display: flex; gap: 6px; margin-left: 18px; }
.app { display: grid; place-items: center; width: 60px; height: 60px; padding-bottom: 2px; position: relative; border: 1px solid transparent; border-radius: 6px; }
.current { background: #272727; border-color: #303030; }
.current::after, .running::after { content: ""; position: absolute; bottom: 0; left: 25px; width: 9px; height: 5px; border-radius: 3px; background: #999; }
.current::after { left: 17px; width: 24px; background: #ed7c62; }
.tray { display: flex; align-items: center; margin-left: auto; padding-right: 29px; }
.tray > * + * { margin-left: 12px; }
.tray > svg:nth-child(2) { margin-left: 27px; }
.tray .lang { width: 40px; margin-left: 26px; text-align: center; line-height: 23px; font-size: 17.500px; letter-spacing: -.2px; }
.tray .lang + svg { margin-left: 25px; }
.tray .clock { width: 100px; margin-left: 17px; text-align: right; line-height: 24px; font-size: 17.700px; }
.tray .preview { position: relative; width: 36px; height: 36px; margin-left: 25px; }
.pre { position: absolute; left: 8px; top: 24px; width: 27px; height: 11px; border-radius: 3px; background: #f4bb00; color: #111; font-weight: 700; font-size: 9px; line-height: 11px; letter-spacing: .5px; text-align: center; }
```
